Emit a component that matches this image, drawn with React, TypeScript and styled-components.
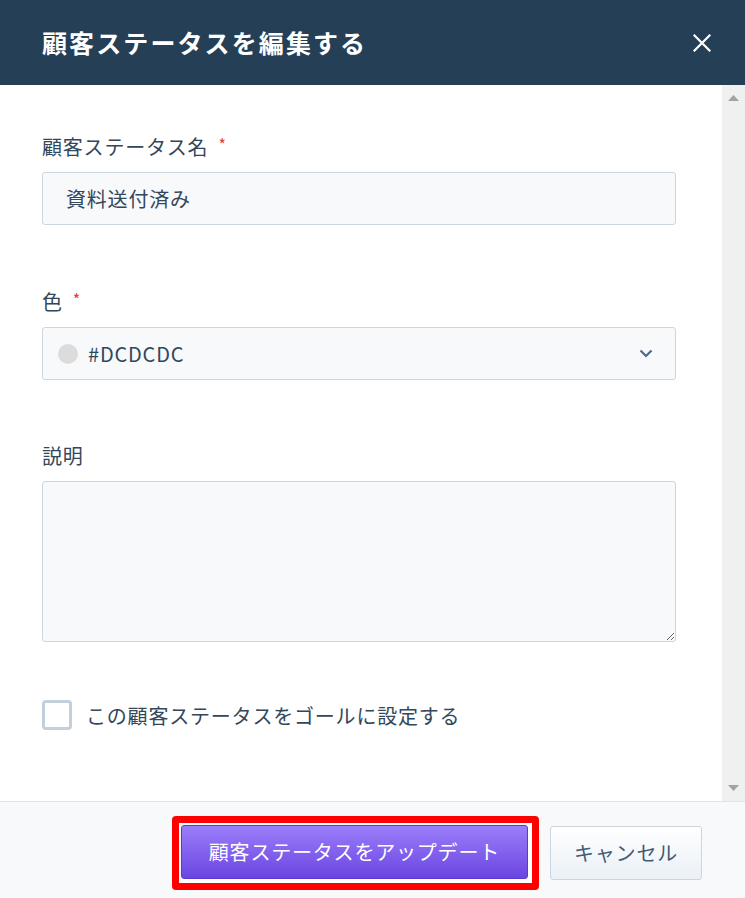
import React from "react";
import styled, { createGlobalStyle } from "styled-components";

const GlobalStyle = createGlobalStyle`
  html, body { margin: 0; padding: 0; height: 100%; }
  body {
    font-family: "Noto Sans CJK JP", "Noto Sans", sans-serif;
    color: #33475b;
    background: #ffffff;
  }
  #root { height: 100%; }
  * { box-sizing: border-box; }
`;

const Dialog = styled.div`
  display: flex;
  flex-direction: column;
  height: 100vh;
  width: 100%;
`;

const Header = styled.header`
  flex: 0 0 85px;
  display: flex;
  align-items: center;
  justify-content: space-between;
  padding: 0 34px 0 42px;
  background: #253f57;
  color: #ffffff;
`;

const Title = styled.h1`
  margin: 0;
  font-size: 25px;
  font-weight: 700;
  letter-spacing: 2.1px;
  line-height: 1;
`;

const CloseButton = styled.button`
  width: 18px;
  height: 18px;
  padding: 0;
  border: none;
  background: none;
  display: flex;
  align-items: center;
  justify-content: center;
  cursor: pointer;
`;

const BodyRow = styled.div`
  flex: 1 1 auto;
  display: flex;
  min-height: 0;
`;

const Body = styled.div`
  flex: 1 1 auto;
  overflow: hidden;
  padding: 50px 46px 0 42px;
  display: flex;
  flex-direction: column;
`;

const ScrollTrack = styled.div`
  flex: 0 0 23px;
  display: flex;
  flex-direction: column;
  justify-content: space-between;
  align-items: center;
  background: #f0f0f0;
`;

const ScrollButton = styled.div`
  height: 26px;
  width: 23px;
  display: flex;
  align-items: center;
  justify-content: center;
`;

const Field = styled.div<{ $gap: number }>`
  display: flex;
  flex-direction: column;
  margin-bottom: ${(p) => p.$gap}px;
`;

const Label = styled.label`
  display: flex;
  align-items: center;
  font-size: 20px;
  letter-spacing: 0.8px;
  line-height: 24px;
  color: #33475b;
  margin-bottom: 13px;
`;

const Required = styled.span`
  color: #e5373a;
  font-size: 16px;
  margin-left: 10px;
  line-height: 1;
  position: relative;
  top: -3px;
`;

const TextInput = styled.input`
  height: 53px;
  width: 100%;
  padding: 0 23px;
  border: 1px solid #cbd6e2;
  border-radius: 3px;
  background: #f7f9fb;
  font-family: inherit;
  font-size: 20px;
  letter-spacing: 0.8px;
  color: #33475b;
  outline: none;
`;

const SelectBox = styled.div`
  height: 53px;
  display: flex;
  align-items: center;
  padding: 0 22px 0 15px;
  border: 1px solid #cbd6e2;
  border-radius: 3px;
  background: #f7f9fb;
  font-size: 20px;
  letter-spacing: 0.8px;
  color: #33475b;
`;

const Swatch = styled.span<{ $color: string }>`
  width: 20px;
  height: 20px;
  border-radius: 50%;
  background: ${(p) => p.$color};
  margin-right: 10px;
  flex: 0 0 auto;
`;

const SelectValue = styled.span`
  flex: 1;
`;

const TextArea = styled.textarea`
  height: 161px;
  width: 100%;
  border: 1px solid #cbd6e2;
  border-radius: 3px;
  background: #f7f9fb;
  font-family: inherit;
  font-size: 20px;
  color: #33475b;
  padding: 12px 23px;
  outline: none;
  display: block;
`;

const CheckRow = styled.label`
  display: flex;
  align-items: center;
  gap: 14px;
  font-size: 20px;
  letter-spacing: 0.8px;
  color: #33475b;
`;

const CheckBox = styled.span`
  width: 30px;
  height: 30px;
  border: 3px solid #c3d0dc;
  border-radius: 4px;
  background: #ffffff;
  flex: 0 0 auto;
`;

const Footer = styled.footer`
  flex: 0 0 97px;
  display: flex;
  align-items: center;
  justify-content: flex-end;
  gap: 11px;
  padding: 12px 43px 7px;
  background: #f7f9fb;
  border-top: 1px solid #dfe3eb;
`;

const Highlight = styled.div`
  display: flex;
  padding: 2px 4px 4px 2px;
  border: 7px solid #ff0000;
  border-radius: 4px;
  background: #ffffff;
`;

const Button = styled.button<{ $primary?: boolean }>`
  height: 54px;
  padding: 0 ${(p) => (p.$primary ? 27 : 23)}px;
  border-radius: 3px;
  font-family: inherit;
  font-size: 20px;
  letter-spacing: 0.8px;
  cursor: pointer;
  border: 1px solid ${(p) => (p.$primary ? "#5a3bd0" : "#cbd6e2")};
  color: ${(p) => (p.$primary ? "#ffffff" : "#425b76")};
  background: ${(p) =>
    p.$primary
      ? "linear-gradient(to bottom, #9a7ef9, #6b45e2)"
      : "linear-gradient(to bottom, #ffffff, #eaf0f6)"};
`;

export default function App() {
  return (
    <>
      <GlobalStyle />
      <Dialog>
        <Header>
          <Title>顧客ステータスを編集する</Title>
          <CloseButton aria-label="close">
            <svg width="18" height="18" viewBox="0 0 18 18">
              <path d="M1.5 1.5 L16.5 16.5 M16.5 1.5 L1.5 16.5" stroke="#ffffff" strokeWidth="2.2" strokeLinecap="square" />
            </svg>
          </CloseButton>
        </Header>
        <BodyRow>
          <Body>
            <Field $gap={65}>
              <Label>
                顧客ステータス名<Required>*</Required>
              </Label>
              <TextInput defaultValue="資料送付済み" />
            </Field>
            <Field $gap={64}>
              <Label>
                色<Required>*</Required>
              </Label>
              <SelectBox>
                <Swatch $color="#dcdcdc" />
                <SelectValue>#DCDCDC</SelectValue>
                <svg width="14" height="9" viewBox="0 0 14 9">
                  <path d="M1.5 1.5 L7 7 L12.5 1.5" stroke="#4d6a88" strokeWidth="2.2" fill="none" />
                </svg>
              </SelectBox>
            </Field>
            <Field $gap={58}>
              <Label>説明</Label>
              <TextArea />
            </Field>
            <CheckRow>
              <CheckBox />
              この顧客ステータスをゴールに設定する
            </CheckRow>
          </Body>
          <ScrollTrack>
            <ScrollButton>
              <svg width="11" height="6" viewBox="0 0 11 6">
                <polygon points="0,6 11,6 5.5,0" fill="#a3a3a3" />
              </svg>
            </ScrollButton>
            <ScrollButton>
              <svg width="11" height="6" viewBox="0 0 11 6">
                <polygon points="0,0 11,0 5.5,6" fill="#a3a3a3" />
              </svg>
            </ScrollButton>
          </ScrollTrack>
        </BodyRow>
        <Footer>
          <Highlight>
            <Button $primary>顧客ステータスをアップデート</Button>
          </Highlight>
          <Button>キャンセル</Button>
        </Footer>
      </Dialog>
    </>
  );
}
